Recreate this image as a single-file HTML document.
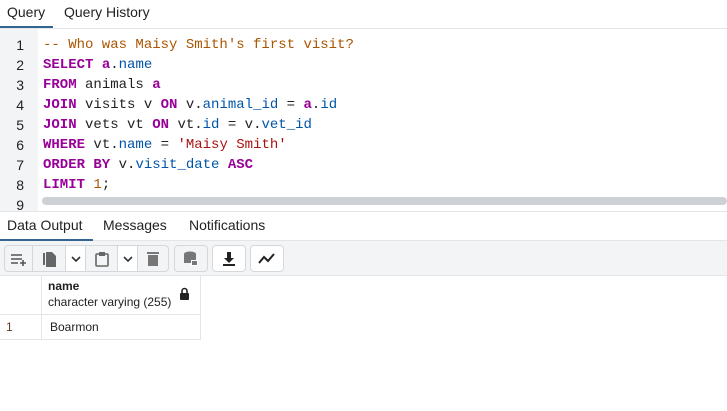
<!DOCTYPE html><html><head><style>
body{margin:0;width:727px;height:411px;background:#fff;font-family:"Liberation Sans",sans-serif;position:relative;overflow:hidden;color:#222}
.a{position:absolute}
.code{font-family:"Liberation Mono",monospace;font-size:14px;color:#222;white-space:pre}
.k{color:#909;font-weight:bold}.p{color:#05a}.c{color:#a50}.s{color:#a11}.n{color:#a50}
.ln{font-family:"Liberation Sans",sans-serif;font-size:14px;color:#222;width:24px;text-align:right}
.btn{position:absolute;top:245px;height:27px;border:1px solid #d4d7dc;border-radius:4px;background:#f3f4f6;box-sizing:border-box}
.seg{position:absolute;top:0;height:25px;border-right:1px solid #d4d7dc;display:flex;align-items:center;justify-content:center}
</style></head><body>
<div class="a" style="left:0;top:0;width:727px;height:28px;border-bottom:1px solid #e3e5e8"></div>
<div class="a" style="left:7px;top:4px;font-size:14px">Query</div>
<div class="a" style="left:64px;top:4px;font-size:14px">Query History</div>
<div class="a" style="left:0;top:26px;width:53px;height:2px;background:#326690"></div>
<div class="a" style="left:0;top:29px;width:38px;height:182px;background:#f3f4f6"></div>
<div class="a" style="left:38px;top:29px;width:689px;height:182px;background:#fff"></div>
<div class="a" style="left:42px;top:197px;width:685px;height:8px;background:#cdd0d5;border-radius:4px"></div>
<div class="a ln" style="left:0;top:35px;line-height:20px">1<br>2<br>3<br>4<br>5<br>6<br>7<br>8<br>9</div>
<div class="a code" style="left:43px;top:35px;line-height:20px"><span class="c">-- Who was Maisy Smith's first visit?</span>
<span class="k">SELECT</span> <span class="k">a</span>.<span class="p">name</span>
<span class="k">FROM</span> animals <span class="k">a</span>
<span class="k">JOIN</span> visits v <span class="k">ON</span> v.<span class="p">animal_id</span> = <span class="k">a</span>.<span class="p">id</span>
<span class="k">JOIN</span> vets vt <span class="k">ON</span> vt.<span class="p">id</span> = v.<span class="p">vet_id</span>
<span class="k">WHERE</span> vt.<span class="p">name</span> = <span class="s">'Maisy Smith'</span>
<span class="k">ORDER BY</span> v.<span class="p">visit_date</span> <span class="k">ASC</span>
<span class="k">LIMIT</span> <span class="n">1</span>;</div>
<div class="a" style="left:0;top:211px;width:727px;height:30px;border-top:1px solid #e3e5e8;border-bottom:1px solid #e3e5e8;box-sizing:border-box"></div>
<div class="a" style="left:7px;top:217px;font-size:14px">Data Output</div>
<div class="a" style="left:103px;top:217px;font-size:14px">Messages</div>
<div class="a" style="left:189px;top:217px;font-size:14px">Notifications</div>
<div class="a" style="left:0;top:239px;width:93px;height:2px;background:#326690"></div>
<div class="a" style="left:0;top:241px;width:727px;height:34px;background:#f3f4f6;border-bottom:1px solid #e3e5e8"></div>
<div class="btn" style="left:4px;width:165px">
 <div class="seg" style="left:0;width:27px"><svg width="18" height="14"><path d="M1 3h11M1 7h11M1 11h7M13 8v6M10 11h6" stroke="#555" stroke-width="1.6" fill="none"/></svg></div>
 <div class="seg" style="left:28px;width:32px"><svg width="14" height="16"><path d="M1 2v12h2V2z" fill="#666"/><path d="M4 1h6l4 4v11H4z" fill="#666"/></svg></div>
 <div class="seg" style="left:61px;width:19px;background:#fff"><svg width="10" height="6"><path d="M1 1l4 4 4-4" stroke="#333" stroke-width="1.6" fill="none"/></svg></div>
 <div class="seg" style="left:81px;width:31px"><svg width="14" height="16"><rect x="1" y="3" width="12" height="12" rx="1" stroke="#666" stroke-width="1.6" fill="none"/><rect x="4" y="1" width="6" height="4" fill="#666"/></svg></div>
 <div class="seg" style="left:113px;width:19px;background:#fff"><svg width="10" height="6"><path d="M1 1l4 4 4-4" stroke="#333" stroke-width="1.6" fill="none"/></svg></div>
 <div class="seg" style="left:133px;width:30px;border:0"><svg width="12" height="15"><rect x="0" y="1" width="12" height="2" fill="#777"/><rect x="1" y="4" width="10" height="11" fill="#777"/></svg></div>
</div>
<div class="btn" style="left:174px;width:34px;display:flex;align-items:center;justify-content:center"><svg width="16" height="16"><ellipse cx="7" cy="3" rx="6" ry="2.5" fill="#777"/><rect x="1" y="3" width="12" height="9" fill="#777"/><rect x="8" y="9" width="7" height="6" fill="#fff"/><rect x="9" y="10" width="5" height="4" fill="#777"/></svg></div>
<div class="btn" style="left:212px;width:34px;background:#fff;display:flex;align-items:center;justify-content:center"><svg width="14" height="16"><path d="M5 1h4v6h3l-5 5-5-5h3z" fill="#222"/><rect x="1" y="13" width="12" height="2" fill="#222"/></svg></div>
<div class="btn" style="left:250px;width:34px;background:#fff;display:flex;align-items:center;justify-content:center"><svg width="18" height="12"><path d="M1 10l5-6 4 4 6-7" stroke="#222" stroke-width="2" fill="none"/></svg></div>
<div class="a" style="left:0;top:275px;width:200px;height:65px;border-right:1px solid #e3e5e8"></div>
<div class="a" style="left:41px;top:275px;width:1px;height:65px;background:#e3e5e8"></div>
<div class="a" style="left:0;top:314px;width:200px;height:1px;background:#e3e5e8"></div>
<div class="a" style="left:0;top:339px;width:200px;height:1px;background:#e3e5e8"></div>
<div class="a" style="left:48px;top:279px;font-size:12px;font-weight:bold">name</div>
<div class="a" style="left:48px;top:295px;font-size:12px">character varying (255)</div>
<svg class="a" style="left:179px;top:287px" width="11" height="13"><path d="M3 6V4a2.5 2.5 0 015 0v2" stroke="#222" stroke-width="1.6" fill="none"/><rect x="1" y="6" width="9" height="7" rx="1" fill="#222"/></svg>
<div class="a" style="left:6px;top:320px;font-size:12px;color:#6a3b1e">1</div>
<div class="a" style="left:50px;top:320px;font-size:12px">Boarmon</div>
</body></html>
